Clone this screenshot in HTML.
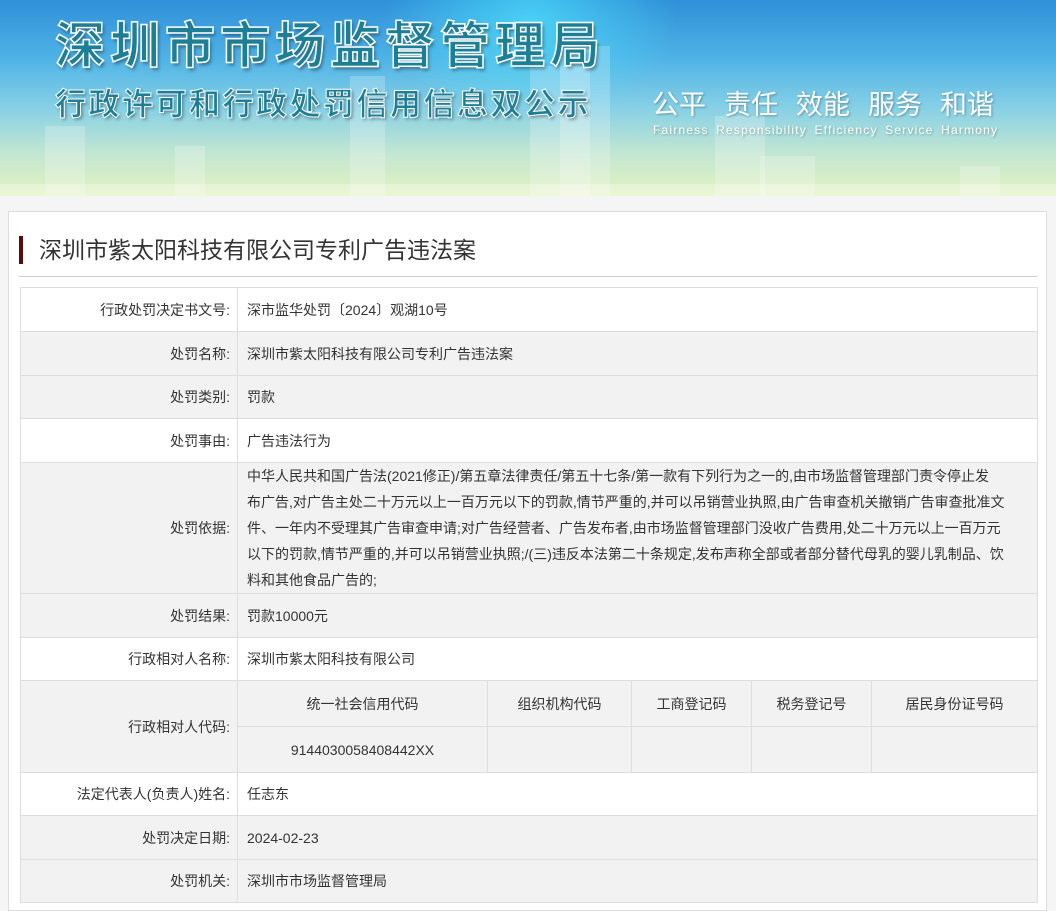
<!DOCTYPE html>
<html><head><meta charset="utf-8">
<style>
*{margin:0;padding:0;box-sizing:border-box}
body{width:1056px;height:911px;background:#f5f5f5;font-family:"Liberation Sans","Noto Sans CJK SC",sans-serif;color:#333;overflow:hidden;position:relative}
.banner{position:absolute;left:0;top:0;width:1056px;height:196px;
background:linear-gradient(180deg,#2f8fd8 0%,#4fb3e6 30%,#86d0e6 55%,#c2e6d2 78%,#e3f2c0 100%);overflow:hidden}
.glow{position:absolute;left:380px;top:-80px;width:300px;height:200px;background:radial-gradient(ellipse,rgba(80,230,255,.7),rgba(80,230,255,0) 70%)}
.bld{position:absolute;bottom:0;background:rgba(255,255,255,.22)}
.t1{position:absolute;left:55px;top:14px;font-size:50px;font-weight:bold;letter-spacing:5px;color:#1d7f96;-webkit-text-stroke:1.5px #fff;text-shadow:2px 3px 3px rgba(0,0,0,.35);font-family:"Noto Sans CJK SC",sans-serif;line-height:56px}
.t2{position:absolute;left:55px;top:82px;font-size:31px;font-weight:bold;letter-spacing:2.5px;color:#1d7f96;-webkit-text-stroke:1px #fff;text-shadow:2px 2px 3px rgba(0,0,0,.35);font-family:"Noto Sans CJK SC",sans-serif;line-height:40px}
.r1{position:absolute;left:652px;top:88px;font-size:27px;color:#fff;white-space:nowrap;text-shadow:1px 1px 2px rgba(0,0,0,.3);line-height:34px}
.r1 span{margin-right:18px}
.r2{position:absolute;left:653px;top:123px;font-size:12px;color:#fff;white-space:nowrap;text-shadow:1px 1px 2px rgba(0,0,0,.3);letter-spacing:1.2px;word-spacing:3px}
.panel{position:absolute;left:8px;top:211px;width:1039px;height:700px;background:#fff;border:1px solid #ddd}
.title{position:absolute;left:10px;top:24px;font-size:23px;color:#333;line-height:28px;padding-left:16px;border-left:4px solid #5a0a0a}
.hr{position:absolute;left:10px;top:64px;width:1018px;border-top:1px solid #ccc}
table{position:absolute;left:11px;top:75px;width:1018px;border-collapse:collapse;font-size:14px;line-height:20px}
td{border:1px solid #ddd;padding:0 9px;vertical-align:middle}
td.l{width:217px;text-align:right;padding-right:7px}
tr.g td{background:#f2f2f2}
.basis{line-height:26px;padding:0 9px;white-space:nowrap}
.sub td{text-align:center}
</style></head><body>
<div class="banner">
<div class="glow"></div>
<div class="bld" style="left:45px;width:40px;height:70px"></div>
<div class="bld" style="left:175px;width:30px;height:50px"></div>
<div class="bld" style="left:350px;width:35px;height:120px"></div>
<div class="bld" style="left:530px;width:60px;height:130px"></div>
<div class="bld" style="left:560px;width:50px;height:150px"></div>
<div class="bld" style="left:715px;width:50px;height:80px"></div>
<div class="bld" style="left:760px;width:55px;height:40px"></div>
<div class="bld" style="left:960px;width:40px;height:30px"></div>
<div class="bld" style="left:0;width:1056px;height:12px;background:rgba(255,255,255,.3)"></div>
<div class="t1">深圳市市场监督管理局</div>
<div class="t2">行政许可和行政处罚信用信息双公示</div>
<div class="r1"><span>公平</span><span>责任</span><span>效能</span><span>服务</span><span>和谐</span></div>
<div class="r2">Fairness Responsibility Efficiency Service Harmony</div>
</div>
<div class="panel">
<div class="title">深圳市紫太阳科技有限公司专利广告违法案</div>
<div class="hr"></div>
<table>
<tr style="height:44px"><td class="l">行政处罚决定书文号:</td><td colspan="5">深市监华处罚〔2024〕观湖10号</td></tr>
<tr class="g" style="height:44px"><td class="l">处罚名称:</td><td colspan="5">深圳市紫太阳科技有限公司专利广告违法案</td></tr>
<tr class="g" style="height:43px"><td class="l">处罚类别:</td><td colspan="5">罚款</td></tr>
<tr style="height:44px"><td class="l">处罚事由:</td><td colspan="5">广告违法行为</td></tr>
<tr class="g" style="height:131px"><td class="l">处罚依据:</td><td colspan="5" class="basis">中华人民共和国广告法(2021修正)/第五章法律责任/第五十七条/第一款有下列行为之一的,由市场监督管理部门责令停止发<br>布广告,对广告主处二十万元以上一百万元以下的罚款,情节严重的,并可以吊销营业执照,由广告审查机关撤销广告审查批准文<br>件、一年内不受理其广告审查申请;对广告经营者、广告发布者,由市场监督管理部门没收广告费用,处二十万元以上一百万元<br>以下的罚款,情节严重的,并可以吊销营业执照;/(三)违反本法第二十条规定,发布声称全部或者部分替代母乳的婴儿乳制品、饮<br>料和其他食品广告的;</td></tr>
<tr class="g" style="height:44px"><td class="l">处罚结果:</td><td colspan="5">罚款10000元</td></tr>
<tr style="height:43px"><td class="l">行政相对人名称:</td><td colspan="5">深圳市紫太阳科技有限公司</td></tr>
<tr class="g sub" style="height:46px"><td class="l" rowspan="2" style="text-align:right">行政相对人代码:</td><td style="width:250px">统一社会信用代码</td><td style="width:144px">组织机构代码</td><td style="width:120px">工商登记码</td><td style="width:120px">税务登记号</td><td>居民身份证号码</td></tr>
<tr class="g sub" style="height:46px"><td>9144030058408442XX</td><td></td><td></td><td></td><td></td></tr>
<tr style="height:43px"><td class="l">法定代表人(负责人)姓名:</td><td colspan="5">任志东</td></tr>
<tr class="g" style="height:44px"><td class="l">处罚决定日期:</td><td colspan="5">2024-02-23</td></tr>
<tr class="g" style="height:43px"><td class="l">处罚机关:</td><td colspan="5">深圳市市场监督管理局</td></tr>
</table>
</div>
</body></html>
